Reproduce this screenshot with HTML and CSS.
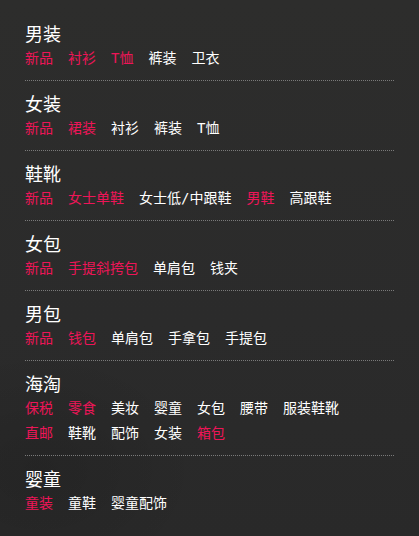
FILE: index.html
```html
<!DOCTYPE html>
<html lang="zh-CN">
<head>
<meta charset="utf-8">
<link rel="stylesheet" href="styles.css">
</head>
<body>
<div class="menu">
  <section class="cat">
    <h3 class="title">男装</h3>
    <div class="links">
      <a class="hot">新品</a><a class="hot">衬衫</a><a class="hot">T恤</a><a>裤装</a><a>卫衣</a>
    </div>
  </section>
  <section class="cat">
    <h3 class="title">女装</h3>
    <div class="links">
      <a class="hot">新品</a><a class="hot">裙装</a><a>衬衫</a><a>裤装</a><a>T恤</a>
    </div>
  </section>
  <section class="cat">
    <h3 class="title">鞋靴</h3>
    <div class="links">
      <a class="hot">新品</a><a class="hot">女士单鞋</a><a>女士低/中跟鞋</a><a class="hot">男鞋</a><a>高跟鞋</a>
    </div>
  </section>
  <section class="cat">
    <h3 class="title">女包</h3>
    <div class="links">
      <a class="hot">新品</a><a class="hot">手提斜挎包</a><a>单肩包</a><a>钱夹</a>
    </div>
  </section>
  <section class="cat">
    <h3 class="title">男包</h3>
    <div class="links">
      <a class="hot">新品</a><a class="hot">钱包</a><a>单肩包</a><a>手拿包</a><a>手提包</a>
    </div>
  </section>
  <section class="cat">
    <h3 class="title">海淘</h3>
    <div class="links">
      <a class="hot">保税</a><a class="hot">零食</a><a>美妆</a><a>婴童</a><a>女包</a><a>腰带</a><a>服装鞋靴</a>
    </div>
    <div class="links">
      <a class="hot">直邮</a><a>鞋靴</a><a>配饰</a><a>女装</a><a class="hot">箱包</a>
    </div>
  </section>
  <section class="cat last">
    <h3 class="title">婴童</h3>
    <div class="links">
      <a class="hot">童装</a><a>童鞋</a><a>婴童配饰</a>
    </div>
  </section>
</div>
</body>
</html>
```

FILE: styles.css
```css
html, body {
  margin: 0;
  padding: 0;
}
body {
  width: 419px;
  height: 536px;
  overflow: hidden;
  background-color: #2b2b2b;
  background-image:
    radial-gradient(ellipse 160px 120px at 40px 470px, rgba(0,0,0,0.12), rgba(0,0,0,0)),
    linear-gradient(180deg, #2d2d2c 0%, #2b2b2b 60%, #292929 100%);
  font-family: "Noto Sans CJK SC", "Noto Sans", sans-serif;
  color: #ffffff;
}
.menu {
  padding: 11px 25px 0 25px;
}
.cat {
  padding: 10px 0 9px 0;
  border-bottom: 1px dotted #7a7a7a;
}
.cat.last {
  border-bottom: none;
}
.title {
  margin: 0;
  padding-bottom: 1px;
  font-size: 18px;
  font-weight: normal;
  line-height: 24px;
  color: #ffffff;
}
.links {
  display: flex;
  flex-wrap: wrap;
  column-gap: 15px;
  font-family: "DejaVu Sans Mono", "Noto Sans CJK SC", monospace;
  font-size: 14px;
  line-height: 25px;
}
.links a {
  color: #ffffff;
  text-decoration: none;
  white-space: nowrap;
}
.links a.hot {
  color: #ee1558;
}
```
